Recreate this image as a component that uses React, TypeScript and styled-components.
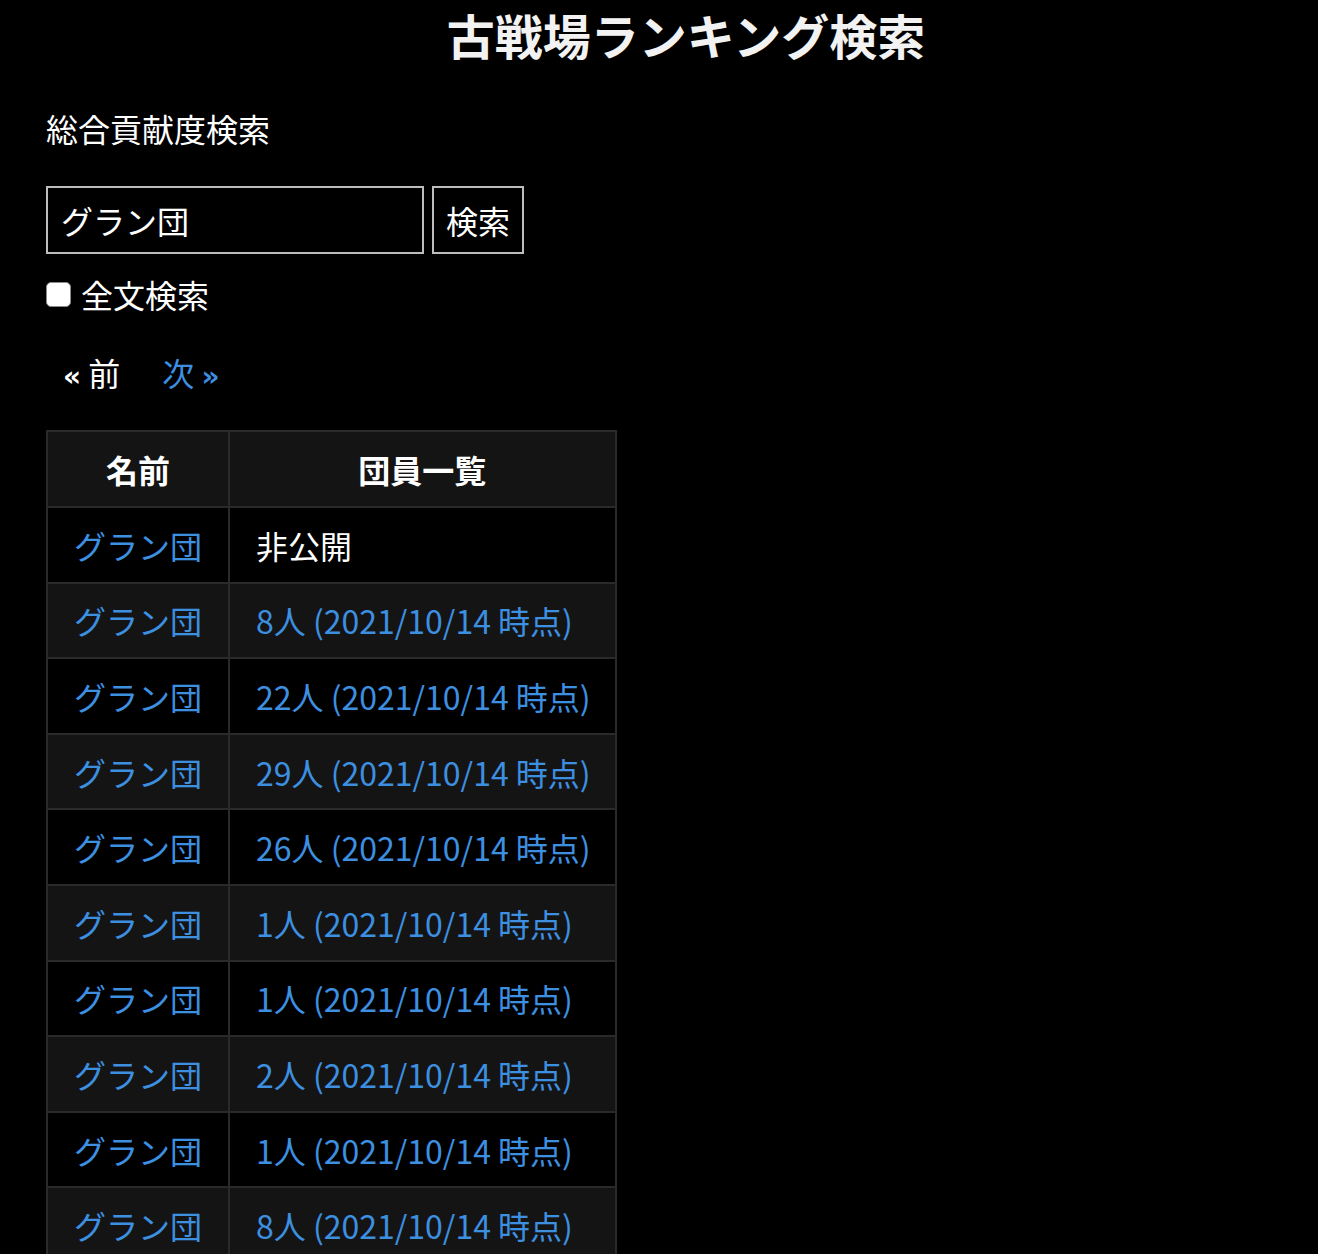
import React from "react";
import styled, { createGlobalStyle } from "styled-components";

const GlobalStyle = createGlobalStyle`
  html, body {
    margin: 0;
    padding: 0;
    background: #000000;
  }
  body {
    font-family: "Noto Sans CJK JP", "Noto Sans", sans-serif;
    color: #ffffff;
  }
`;

const Page = styled.div`
  padding: 2px 46px 0 46px;
`;

const Title = styled.h1`
  margin: 0;
  padding-left: 54px;
  text-align: center;
  font-size: 48px;
  font-weight: 700;
  line-height: 64px;
  color: #f2f2f2;
`;

const SubTitle = styled.p`
  margin: 38px 0 0;
  font-size: 32px;
  line-height: 48px;
`;

const SearchForm = styled.form`
  display: flex;
  gap: 8px;
  margin-top: 34px;
`;

const SearchInput = styled.input`
  box-sizing: border-box;
  width: 378px;
  height: 68px;
  padding: 0 13px;
  border: 2px solid #bdbdbd;
  background: #000000;
  color: #ffffff;
  font-family: inherit;
  font-size: 32px;
  outline: none;
`;

const SearchButton = styled.button`
  box-sizing: border-box;
  height: 68px;
  padding: 0 12px;
  border: 2px solid #bdbdbd;
  background: #000000;
  color: #ffffff;
  font-family: inherit;
  font-size: 32px;
`;

const CheckRow = styled.label`
  display: flex;
  align-items: center;
  gap: 10px;
  margin-top: 20px;
  font-size: 32px;
  line-height: 40px;
`;

const CheckBox = styled.input`
  appearance: none;
  margin: 0;
  width: 25px;
  height: 25px;
  border-radius: 5px;
  border: 1px solid #8a8a8a;
  background: #ffffff;
`;

const Pager = styled.nav`
  display: flex;
  gap: 42px;
  margin-top: 34px;
  padding-left: 17px;
  font-size: 32px;
  line-height: 48px;
  height: 48px;
`;

const PagerItem = styled.span<{ $active?: boolean }>`
  color: ${(p) => (p.$active ? "#3d8fe0" : "#ffffff")};
`;

const Quote = styled.span`
  font-family: "DejaVu Sans", sans-serif;
  font-weight: 700;
  font-size: 28px;
  line-height: 1;
`;

const Table = styled.table`
  margin-top: 34px;
  border-collapse: collapse;
  border: 2px solid #2a2a2a;
  font-size: 32px;
  line-height: 40px;
`;

const HeadCell = styled.th`
  padding: 17px 26px;
  border: 2px solid #2a2a2a;
  background: #141414;
  font-weight: 700;
  text-align: center;
`;

const Row = styled.tr`
  &:nth-child(even) td {
    background: #141414;
  }
`;

const NameCell = styled.td`
  padding: 16.8px 26px;
  border: 2px solid #2a2a2a;
  text-align: center;
  color: #3d8fe0;
`;

const MemberCell = styled.td<{ $link?: boolean }>`
  padding: 16.8px 24px 16.8px 26px;
  border: 2px solid #2a2a2a;
  text-align: left;
  color: ${(p) => (p.$link ? "#3d8fe0" : "#ffffff")};
  white-space: nowrap;
`;

const members: (number | null)[] = [null, 8, 22, 29, 26, 1, 1, 2, 1, 8];

export default function App() {
  return (
    <>
      <GlobalStyle />
      <Page>
        <Title>古戦場ランキング検索</Title>
        <SubTitle>総合貢献度検索</SubTitle>
        <SearchForm onSubmit={(e) => e.preventDefault()}>
          <SearchInput defaultValue="グラン団" />
          <SearchButton type="submit">検索</SearchButton>
        </SearchForm>
        <CheckRow>
          <CheckBox type="checkbox" />
          全文検索
        </CheckRow>
        <Pager>
          <PagerItem>
            <Quote>«</Quote> 前
          </PagerItem>
          <PagerItem $active>
            次 <Quote>»</Quote>
          </PagerItem>
        </Pager>
        <Table>
          <thead>
            <tr>
              <HeadCell>名前</HeadCell>
              <HeadCell>団員一覧</HeadCell>
            </tr>
          </thead>
          <tbody>
            {members.map((m, i) => (
              <Row key={i}>
                <NameCell>グラン団</NameCell>
                {m === null ? (
                  <MemberCell>非公開</MemberCell>
                ) : (
                  <MemberCell $link>{`${m}人 (2021/10/14 時点)`}</MemberCell>
                )}
              </Row>
            ))}
          </tbody>
        </Table>
      </Page>
    </>
  );
}
